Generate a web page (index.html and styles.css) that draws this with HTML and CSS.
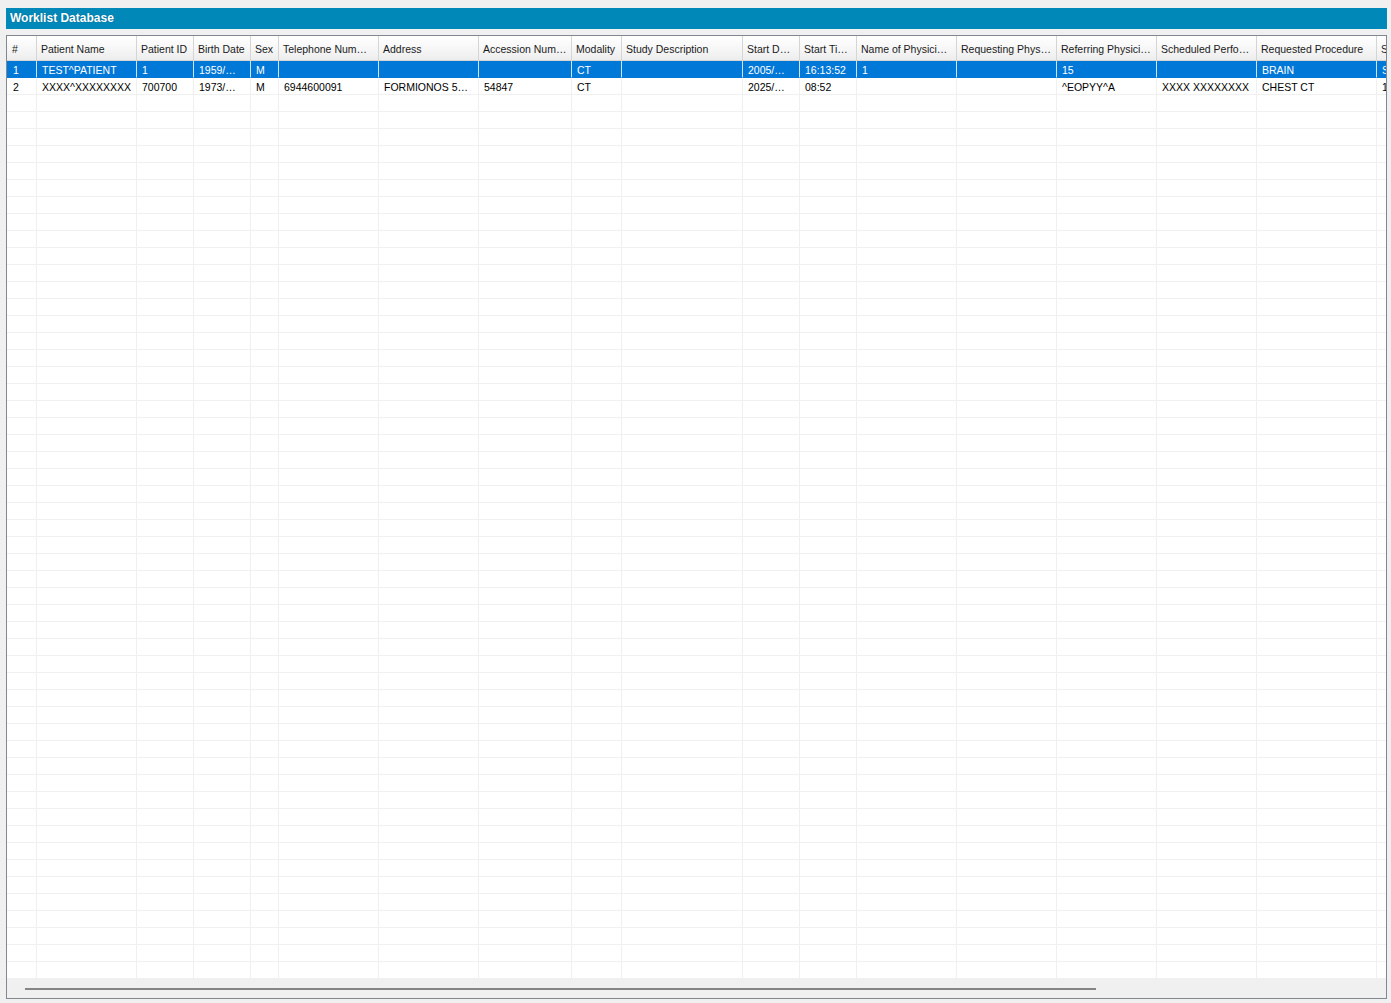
FILE: index.html
```html
<!DOCTYPE html>
<html>
<head>
<meta charset="utf-8">
<title>Worklist Database</title>
<link rel="stylesheet" href="styles.css">
</head>
<body>
<div class="window">
  <div class="titlebar">Worklist Database</div>
  <div class="grid">
    <div class="viewport">
      <div class="row head">
        <div class="cell">#</div>
        <div class="cell">Patient Name</div>
        <div class="cell">Patient ID</div>
        <div class="cell">Birth Date</div>
        <div class="cell">Sex</div>
        <div class="cell">Telephone Num…</div>
        <div class="cell">Address</div>
        <div class="cell">Accession Num…</div>
        <div class="cell">Modality</div>
        <div class="cell">Study Description</div>
        <div class="cell">Start D…</div>
        <div class="cell">Start Ti…</div>
        <div class="cell">Name of Physici…</div>
        <div class="cell">Requesting Phys…</div>
        <div class="cell">Referring Physici…</div>
        <div class="cell">Scheduled Perfo…</div>
        <div class="cell">Requested Procedure</div>
        <div class="cell">S</div>
      </div>
      <div class="row sel">
        <div class="cell">1</div>
        <div class="cell">TEST^PATIENT</div>
        <div class="cell">1</div>
        <div class="cell">1959/…</div>
        <div class="cell">M</div>
        <div class="cell"></div>
        <div class="cell"></div>
        <div class="cell"></div>
        <div class="cell">CT</div>
        <div class="cell"></div>
        <div class="cell">2005/…</div>
        <div class="cell">16:13:52</div>
        <div class="cell">1</div>
        <div class="cell"></div>
        <div class="cell">15</div>
        <div class="cell"></div>
        <div class="cell">BRAIN</div>
        <div class="cell">S</div>
      </div>
      <div class="row">
        <div class="cell">2</div>
        <div class="cell">XXXX^XXXXXXXX</div>
        <div class="cell">700700</div>
        <div class="cell">1973/…</div>
        <div class="cell">M</div>
        <div class="cell">6944600091</div>
        <div class="cell">FORMIONOS 5…</div>
        <div class="cell">54847</div>
        <div class="cell">CT</div>
        <div class="cell"></div>
        <div class="cell">2025/…</div>
        <div class="cell">08:52</div>
        <div class="cell"></div>
        <div class="cell"></div>
        <div class="cell">^EOPYY^A</div>
        <div class="cell">XXXX XXXXXXXX</div>
        <div class="cell">CHEST CT</div>
        <div class="cell">1</div>
      </div>
      <div class="filler"></div>
    </div>
    <div class="hscroll"><div class="thumb"></div></div>
  </div>
</div>
</body>
</html>
```

FILE: styles.css
```css
html, body {
  margin: 0;
  padding: 0;
  background: #f0f0f0;
}
body {
  font-family: "Liberation Sans", Arial, sans-serif;
  font-size: 10.5px;
  color: #000;
}
.window {
  padding: 8px 5px 0 6px;
}
.titlebar {
  width: 1381px;
  height: 21px;
  background: #0088b8;
  color: #fff;
  font-weight: bold;
  font-size: 12px;
  line-height: 21px;
  padding-left: 4px;
  box-sizing: border-box;
  text-shadow: 0 0 1px rgba(0, 60, 90, 0.6);
}
.grid {
  margin-top: 6px;
  width: 1381px;
  height: 964px;
  border: 1px solid #828790;
  box-sizing: border-box;
  background: #fff;
  display: flex;
  flex-direction: column;
}
.viewport {
  width: 1379px;
  overflow: hidden;
  flex: 1 1 auto;
  display: flex;
  flex-direction: column;
}
.row {
  display: grid;
  grid-template-columns: 30px 100px 57px 57px 28px 100px 100px 93px 50px 121px 57px 57px 100px 100px 100px 100px 120px 100px;
  height: 17px;
  flex: 0 0 auto;
}
.cell {
  box-sizing: border-box;
  border-right: 1px solid #f0f0f0;
  border-bottom: 1px solid #f0f0f0;
  padding-left: 5px;
  padding-top: 2px;
  white-space: nowrap;
  overflow: hidden;
  line-height: 14px;
}
.cell:first-child {
  padding-left: 6px;
}
.head {
  height: 25px;
}
.head .cell {
  background: linear-gradient(#ffffff 0%, #f7f7f7 50%, #ededed 100%);
  border-right: 1px solid #d5d5d5;
  border-bottom: 1px solid #d5d5d5;
  line-height: 22px;
  padding-top: 2px;
  padding-left: 4px;
  color: #1a1a1a;
}
.head .cell:first-child {
  padding-left: 5px;
}
.sel .cell {
  background: #0078d7;
  color: #fff;
  border-right-color: #cfe3f5;
  border-bottom-color: #0078d7;
}
.filler {
  flex: 1 1 auto;
  background:
    linear-gradient(to bottom, transparent 16px, #f0f0f0 16px) 0 0 / 100% 17px repeat-y,
    linear-gradient(to right,
      transparent 29px, #f0f0f0 29px, #f0f0f0 30px,
      transparent 30px, transparent 129px, #f0f0f0 129px, #f0f0f0 130px,
      transparent 130px, transparent 186px, #f0f0f0 186px, #f0f0f0 187px,
      transparent 187px, transparent 243px, #f0f0f0 243px, #f0f0f0 244px,
      transparent 244px, transparent 271px, #f0f0f0 271px, #f0f0f0 272px,
      transparent 272px, transparent 371px, #f0f0f0 371px, #f0f0f0 372px,
      transparent 372px, transparent 471px, #f0f0f0 471px, #f0f0f0 472px,
      transparent 472px, transparent 564px, #f0f0f0 564px, #f0f0f0 565px,
      transparent 565px, transparent 614px, #f0f0f0 614px, #f0f0f0 615px,
      transparent 615px, transparent 735px, #f0f0f0 735px, #f0f0f0 736px,
      transparent 736px, transparent 792px, #f0f0f0 792px, #f0f0f0 793px,
      transparent 793px, transparent 849px, #f0f0f0 849px, #f0f0f0 850px,
      transparent 850px, transparent 949px, #f0f0f0 949px, #f0f0f0 950px,
      transparent 950px, transparent 1049px, #f0f0f0 1049px, #f0f0f0 1050px,
      transparent 1050px, transparent 1149px, #f0f0f0 1149px, #f0f0f0 1150px,
      transparent 1150px, transparent 1249px, #f0f0f0 1249px, #f0f0f0 1250px,
      transparent 1250px, transparent 1369px, #f0f0f0 1369px, #f0f0f0 1370px,
      transparent 1370px) 0 0 / 100% 100% no-repeat,
    #fff;
}
.hscroll {
  flex: 0 0 19px;
  height: 19px;
  background: #f0f0f0;
  position: relative;
}
.thumb {
  position: absolute;
  left: 18px;
  top: 9px;
  width: 1071px;
  height: 2px;
  background: #858585;
}
```
